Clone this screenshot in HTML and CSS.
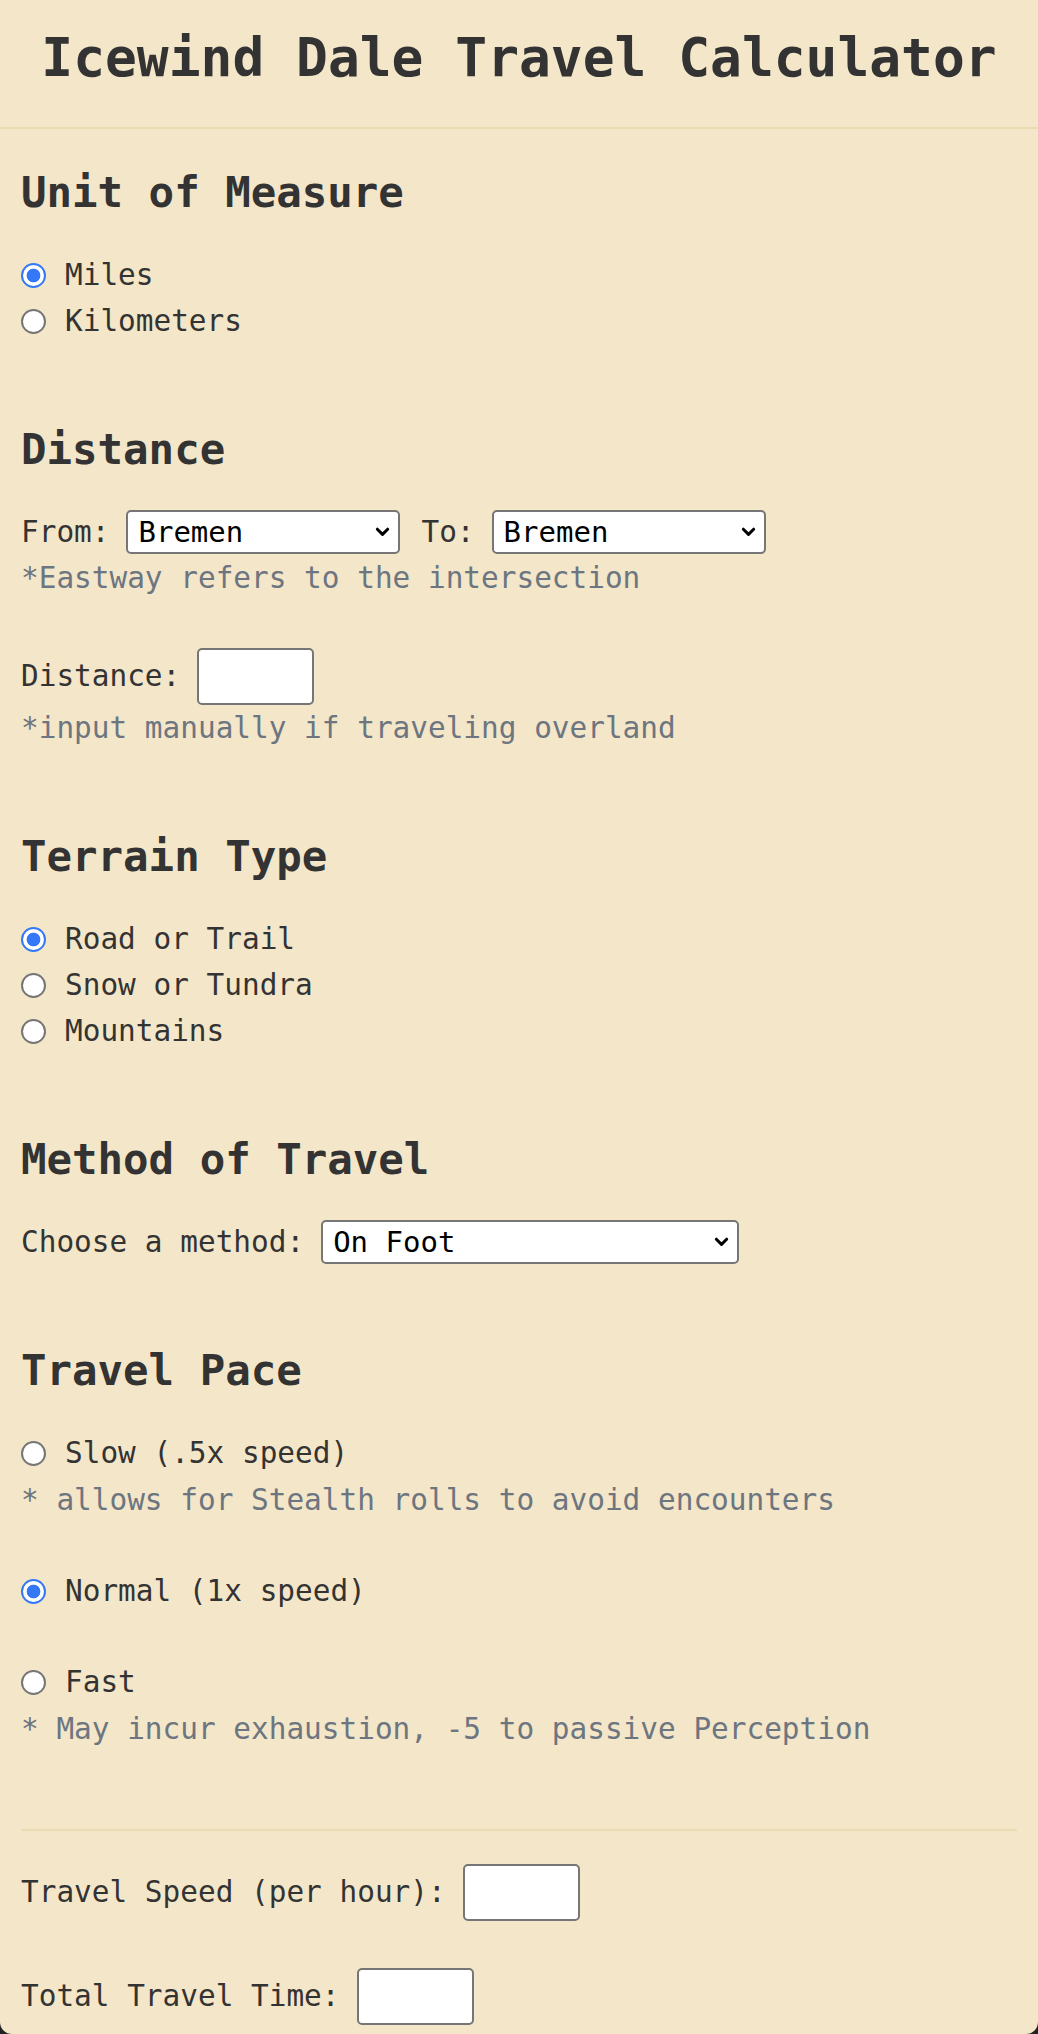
FILE: index.html
```html
<!DOCTYPE html>
<html lang="en">
<head>
<meta charset="utf-8">
<title>Icewind Dale Travel Calculator</title>
<link rel="stylesheet" href="styles.css">
</head>
<body>
<div class="card">
  <header class="header">
    <h1 class="title">Icewind Dale Travel Calculator</h1>
  </header>
  <main class="content">
    <section class="section first">
      <h2 class="heading">Unit of Measure</h2>
      <label class="option"><input type="radio" name="unit" class="radio" checked><span>Miles</span></label>
      <label class="option"><input type="radio" name="unit" class="radio"><span>Kilometers</span></label>
    </section>

    <section class="section">
      <h2 class="heading">Distance</h2>
      <div class="field-row">
        <label class="field-label">From:</label>
        <span class="select-wrap w-route">
          <select class="select"><option>Bremen</option></select>
          <svg class="chev" viewBox="0 0 16 10" width="15" height="10"><path d="M2.5 2 L8 7.5 L13.5 2" fill="none" stroke="#000" stroke-width="3.2" stroke-linecap="round" stroke-linejoin="round"/></svg>
        </span>
        <label class="field-label to-label">To:</label>
        <span class="select-wrap w-route">
          <select class="select"><option>Bremen</option></select>
          <svg class="chev" viewBox="0 0 16 10" width="15" height="10"><path d="M2.5 2 L8 7.5 L13.5 2" fill="none" stroke="#000" stroke-width="3.2" stroke-linecap="round" stroke-linejoin="round"/></svg>
        </span>
      </div>
      <p class="note">*Eastway refers to the intersection</p>
      <div class="field-row input-row spaced">
        <label class="field-label">Distance:</label>
        <input class="box" type="text">
      </div>
      <p class="note">*input manually if traveling overland</p>
    </section>

    <section class="section">
      <h2 class="heading">Terrain Type</h2>
      <label class="option"><input type="radio" name="terrain" class="radio" checked><span>Road or Trail</span></label>
      <label class="option"><input type="radio" name="terrain" class="radio"><span>Snow or Tundra</span></label>
      <label class="option"><input type="radio" name="terrain" class="radio"><span>Mountains</span></label>
    </section>

    <section class="section">
      <h2 class="heading">Method of Travel</h2>
      <div class="field-row">
        <label class="field-label">Choose a method:</label>
        <span class="select-wrap w-method">
          <select class="select"><option>On Foot</option></select>
          <svg class="chev" viewBox="0 0 16 10" width="15" height="10"><path d="M2.5 2 L8 7.5 L13.5 2" fill="none" stroke="#000" stroke-width="3.2" stroke-linecap="round" stroke-linejoin="round"/></svg>
        </span>
      </div>
    </section>

    <section class="section">
      <h2 class="heading">Travel Pace</h2>
      <div class="pace-group">
        <label class="option"><input type="radio" name="pace" class="radio"><span>Slow (.5x speed)</span></label>
        <p class="note pace-note">* allows for Stealth rolls to avoid encounters</p>
      </div>
      <div class="pace-group">
        <label class="option"><input type="radio" name="pace" class="radio" checked><span>Normal (1x speed)</span></label>
      </div>
      <div class="pace-group">
        <label class="option"><input type="radio" name="pace" class="radio"><span>Fast</span></label>
        <p class="note pace-note">* May incur exhaustion, -5 to passive Perception</p>
      </div>
    </section>

    <div class="divider"></div>

    <section class="results">
      <div class="field-row input-row">
        <label class="field-label">Travel Speed (per hour):</label>
        <input class="box" type="text">
      </div>
      <div class="field-row input-row spaced">
        <label class="field-label">Total Travel Time:</label>
        <input class="box" type="text">
      </div>
    </section>
  </main>
</div>
</body>
</html>
```

FILE: styles.css
```css
html, body {
  margin: 0;
  padding: 0;
}

body {
  background: #222222;
  font-family: "DejaVu Sans Mono", "Liberation Mono", monospace;
  font-size: 29.4px;
  color: #333333;
}

.card {
  background: #f4e6c8;
  border-radius: 0 0 12px 12px;
  min-height: 2034px;
  box-sizing: border-box;
}

.header {
  height: 129px;
  box-sizing: border-box;
  border-bottom: 2px solid #ecdcb4;
  padding-bottom: 12px;
  display: flex;
  align-items: center;
  justify-content: center;
}

.title {
  margin: 0;
  font-size: 52.9px;
  font-weight: bold;
  line-height: 64px;
  color: #333333;
}

.content {
  padding: 0 21px 8px;
}

.section.first {
  padding-top: 38px;
}

.section + .section {
  margin-top: 80px;
}

.heading {
  margin: 0 0 33px;
  font-size: 42.4px;
  font-weight: bold;
  line-height: 52px;
  color: #333333;
}

.option {
  display: flex;
  align-items: center;
  gap: 19px;
  height: 46px;
}

.radio {
  appearance: none;
  -webkit-appearance: none;
  margin: 0;
  width: 25px;
  height: 25px;
  box-sizing: border-box;
  border-radius: 50%;
  border: 2px solid #767676;
  background: #ffffff;
  flex: none;
}

.radio:checked {
  border-color: #3478f6;
  background: radial-gradient(circle, #3478f6 0 6.5px, #ffffff 7.2px);
}

.field-row {
  display: flex;
  align-items: center;
  gap: 17px;
  height: 46px;
}

.field-label {
  white-space: pre;
}

.to-label {
  margin-left: 4px;
}

.select-wrap {
  position: relative;
  display: inline-block;
  height: 44px;
}

.w-route {
  width: 274px;
}

.w-method {
  width: 418px;
}

.select {
  appearance: none;
  -webkit-appearance: none;
  width: 100%;
  height: 44px;
  box-sizing: border-box;
  margin: 0;
  padding: 0 40px 0 10px;
  border: 2px solid #767676;
  border-radius: 5px;
  background: #ffffff;
  color: #000000;
  font-family: "DejaVu Sans Mono", "Liberation Mono", monospace;
  font-size: 29px;
}

.chev {
  position: absolute;
  right: 10px;
  top: 17px;
  pointer-events: none;
}

.note {
  margin: 0;
  line-height: 46px;
  color: #6c7580;
}

.pace-note {
  margin-top: 1px;
}

.pace-group + .pace-group {
  margin-top: 45px;
}

.input-row {
  height: 58px;
}

.spaced {
  margin-top: 46px;
}

.box {
  width: 117px;
  height: 57px;
  box-sizing: border-box;
  margin: 0;
  border: 2px solid #767676;
  border-radius: 5px;
  background: #ffffff;
  font-family: "DejaVu Sans Mono", "Liberation Mono", monospace;
  font-size: 29px;
}

.divider {
  margin-top: 77px;
  height: 2px;
  background: #ecdcb4;
}

.results {
  padding-top: 32px;
}
```
